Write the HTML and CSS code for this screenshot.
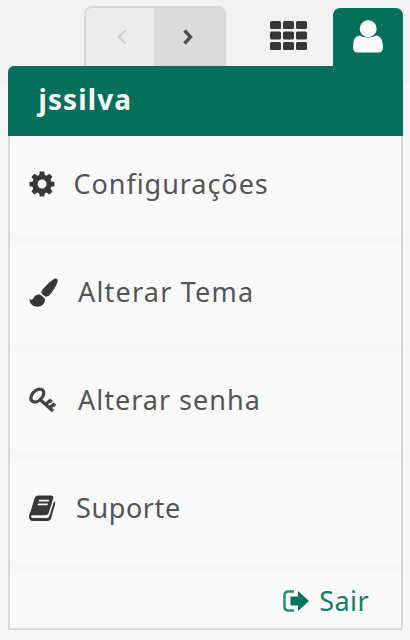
FILE: index.html
```html
<!DOCTYPE html>
<html lang="pt-BR">
<head>
<meta charset="utf-8">
<title>Menu do usuário</title>
<link rel="stylesheet" href="styles.css">
</head>
<body>
<header class="toolbar">
  <div class="pager">
    <button class="prev" aria-label="Anterior"><svg width="12" height="18" viewBox="0 0 12 18"><path d="M9.500 2.500 3 9l6.500 6.500"/></svg></button>
    <button class="next" aria-label="Próximo"><svg width="12" height="18" viewBox="0 0 12 18"><path d="M2.500 2.500 8.500 9l-6 6.500"/></svg></button>
  </div>
  <button class="apps" aria-label="Aplicativos"><svg width="37" height="29" viewBox="0 0 37 29"><g><rect width="11" height="8" rx="1.500"/><rect x="13" width="11" height="8" rx="1.500"/><rect x="26" width="11" height="8" rx="1.500"/><rect y="10.500" width="11" height="8" rx="1.500"/><rect x="13" y="10.500" width="11" height="8" rx="1.500"/><rect x="26" y="10.500" width="11" height="8" rx="1.500"/><rect y="21" width="11" height="8" rx="1.500"/><rect x="13" y="21" width="11" height="8" rx="1.500"/><rect x="26" y="21" width="11" height="8" rx="1.500"/></g></svg></button>
  <button class="user" aria-label="Usuário"><svg width="30" height="33" viewBox="0 0 30 33"><path d="M6.500 15.500Q10 17.500 15 17.500t8.500-2C28 16 30 21 30 27q0 5.500-4.500 5.500h-21Q0 32.500 0 27q0-11 6.500-11.500Z"/><circle cx="15.200" cy="8.700" r="8.500"/></svg></button>
</header>
<main class="menu">
  <h1 class="name">jssilva</h1>
  <ul class="items">
    <li><a class="item config"><svg width="26" height="26" viewBox="0 0 26 26"><path fill-rule="evenodd" d="M10.800.5h4.400l.6 3.400 1.800.8 2.900-2 3 3-2 2.900.8 1.800 3.200.5v4.300l-3.200.6-.8 1.800 2 2.800-3 3-2.900-2-1.800.8-.6 3.200h-4.400l-.6-3.200-1.800-.8-2.900 2-3-3 2-2.800-.8-1.800-3.200-.6v-4.300l3.200-.5.8-1.800-2-2.900 3-3 2.900 2 1.800-.8ZM13 8.500a4.500 4.500 0 1 0 0 9 4.500 4.500 0 0 0 0-9Z"/></svg><span>Configurações</span></a></li>
    <li><a class="item theme"><svg width="29" height="29" viewBox="0 0 29 29"><path d="M25.500.7Q28.800-.3 28.700 3c-.2 3-5.400 11.400-8.400 14.200-2 1.900-3.700 1.700-5.200.5l-2.200-2q-1.300-1.600.4-3.800C16.400 8 23.500 1.200 25.500.7ZM11.800 16.900l4 3.500c.8 5-3 8.300-7.500 8.300C3 28.700.6 24.800.3 20.700c1.700 1.300 3.300 1.400 4.200-.6 1.300-3 4.300-4.100 7.300-3.200Z"/></svg><span>Alterar Tema</span></a></li>
    <li><a class="item password"><svg class="line" width="28" height="26" viewBox="0 0 28 26"><path d="M2.500 8.500C4 4.500 8.500 1.500 12 2.300c3.700.9 3.500 5.500.6 9-2.300 2.800-6.100 4.400-8.700 3.200C1.400 13.500 1.600 10.800 2.500 8.500ZM10.500 12 24 24M16.500 17.500l4.500-4 1.800 1.500M20.500 21l4-3.500 1.700 1.500"/></svg><span>Alterar senha</span></a></li>
    <li><a class="item support"><svg width="27" height="26" viewBox="0 0 27 26"><path fill-rule="evenodd" d="M9.200.5h13q2.800 0 2 3l-4.300 14q-.8 2.800-3.600 2.800H3.500q-1.500 0-1.500 1.200 0 1.500 2 1.500h14q1.800 0 2.400-2l4.700-14.800q1.600.8 1 3l-3.900 13.500Q21.300 26 18.500 26H4Q0 26 0 21.500c0-2 1-3.800 2-6.300L5.300 4Q6.200.5 9.200.5Zm.9 4.300-.5 1.700h10l.5-1.700ZM9 8.600l-.5 1.700h10l.5-1.700Z"/></svg><span>Suporte</span></a></li>
  </ul>
  <footer class="footer"><a class="logout"><svg width="27" height="22" viewBox="0 0 27 22"><path class="door" d="M11 1.500H5.500Q1.500 1.500 1.500 5.500v11q0 4 4 4H11"/><path d="M7.500 6.500H15V1L26 11 15 21v-5.500H7.500Z"/></svg><span>Sair</span></a></footer>
</main>
</body>
</html>
```
FILE: styles.css
```css
* { box-sizing: border-box; }
body {
  margin: 0;
  width: 410px;
  height: 640px;
  overflow: hidden;
  background: linear-gradient(#f2f2f2 82px, #f7f7f7 84px);
  color: #555;
  font-family: "Noto Sans", sans-serif;
}
button { border: 0; padding: 0; background: none; }
svg { display: block; flex: none; fill: #373737; }
.toolbar {
  display: flex;
  height: 66px;
  padding: 6px 7.500px 0 84px;
}
.pager {
  display: flex;
  width: 142px;
  border: 2px solid #d7d7d7;
  border-bottom: 0;
  border-radius: 8px 8px 0 0;
  overflow: hidden;
}
.pager button {
  display: flex;
  justify-content: center;
  width: 68px;
  padding-top: 20px;
  background: #ececec;
}
.pager .next { width: 70px; background: #dcdcdc; }
.pager svg { fill: none; stroke: #505050; stroke-width: 3.4; }
.pager .prev svg { margin-left: 3px; stroke: #d0d0d0; stroke-width: 2.4; }
.pager .next svg { margin-right: 2px; }
.apps { width: 37px; margin-left: 44px; padding-top: 15px; display: flex; }
.user {
  display: flex;
  justify-content: center;
  width: 70px;
  margin: 2px 0 0 auto;
  padding-top: 12px;
  background: #046f5a;
  border-radius: 7px 7px 0 0;
}
.user svg { fill: #fafafa; }
.menu {
  width: 395px;
  height: 564px;
  margin-left: 7.500px;
}
.name {
  height: 69.500px;
  margin: 0;
  padding-left: 31px;
  border-radius: 6px 0 0 0;
  background: #046f5a;
  color: #fafafa;
  font-size: 28px;
  line-height: 66px;
  letter-spacing: 1.1px;
}
.items {
  margin: 0;
  padding: 0;
  list-style: none;
  background: #fafafa;
  border: solid #d8d8d8;
  border-width: 0 2px;
}
.items li { height: 108px; border-bottom: 7px solid #f8f8f8; }
.items li:last-child { height: 112px; }
.item {
  display: flex;
  align-items: center;
  height: 97px;
  padding-left: 19.500px;
  font-size: 27px;
  line-height: 36px;
}
.item span { margin-left: 20px; }
.item.config span { margin-left: 18.500px; letter-spacing: 0.95px; }
.item.theme span { letter-spacing: 1.2px; }
.item.password span { margin-left: 21px; letter-spacing: 1px; }
.item.support span { letter-spacing: 0.6px; }
.line { fill: none; stroke: #444; stroke-width: 3.2; }
.footer {
  display: flex;
  justify-content: flex-end;
  height: 58.500px;
  padding: 11px 31.500px 0 0;
  border: 2px solid #d8d8d8;
  border-top: 0;
  background: #fafafa;
}
.logout { display: flex; align-items: center; gap: 9px; height: 36px; color: #147a66; font-size: 27px; line-height: 36px; letter-spacing: 0.4px; }
.logout svg { fill: #04755e; }
.logout .door { fill: none; stroke: #2d8877; stroke-width: 2.5; }
```
